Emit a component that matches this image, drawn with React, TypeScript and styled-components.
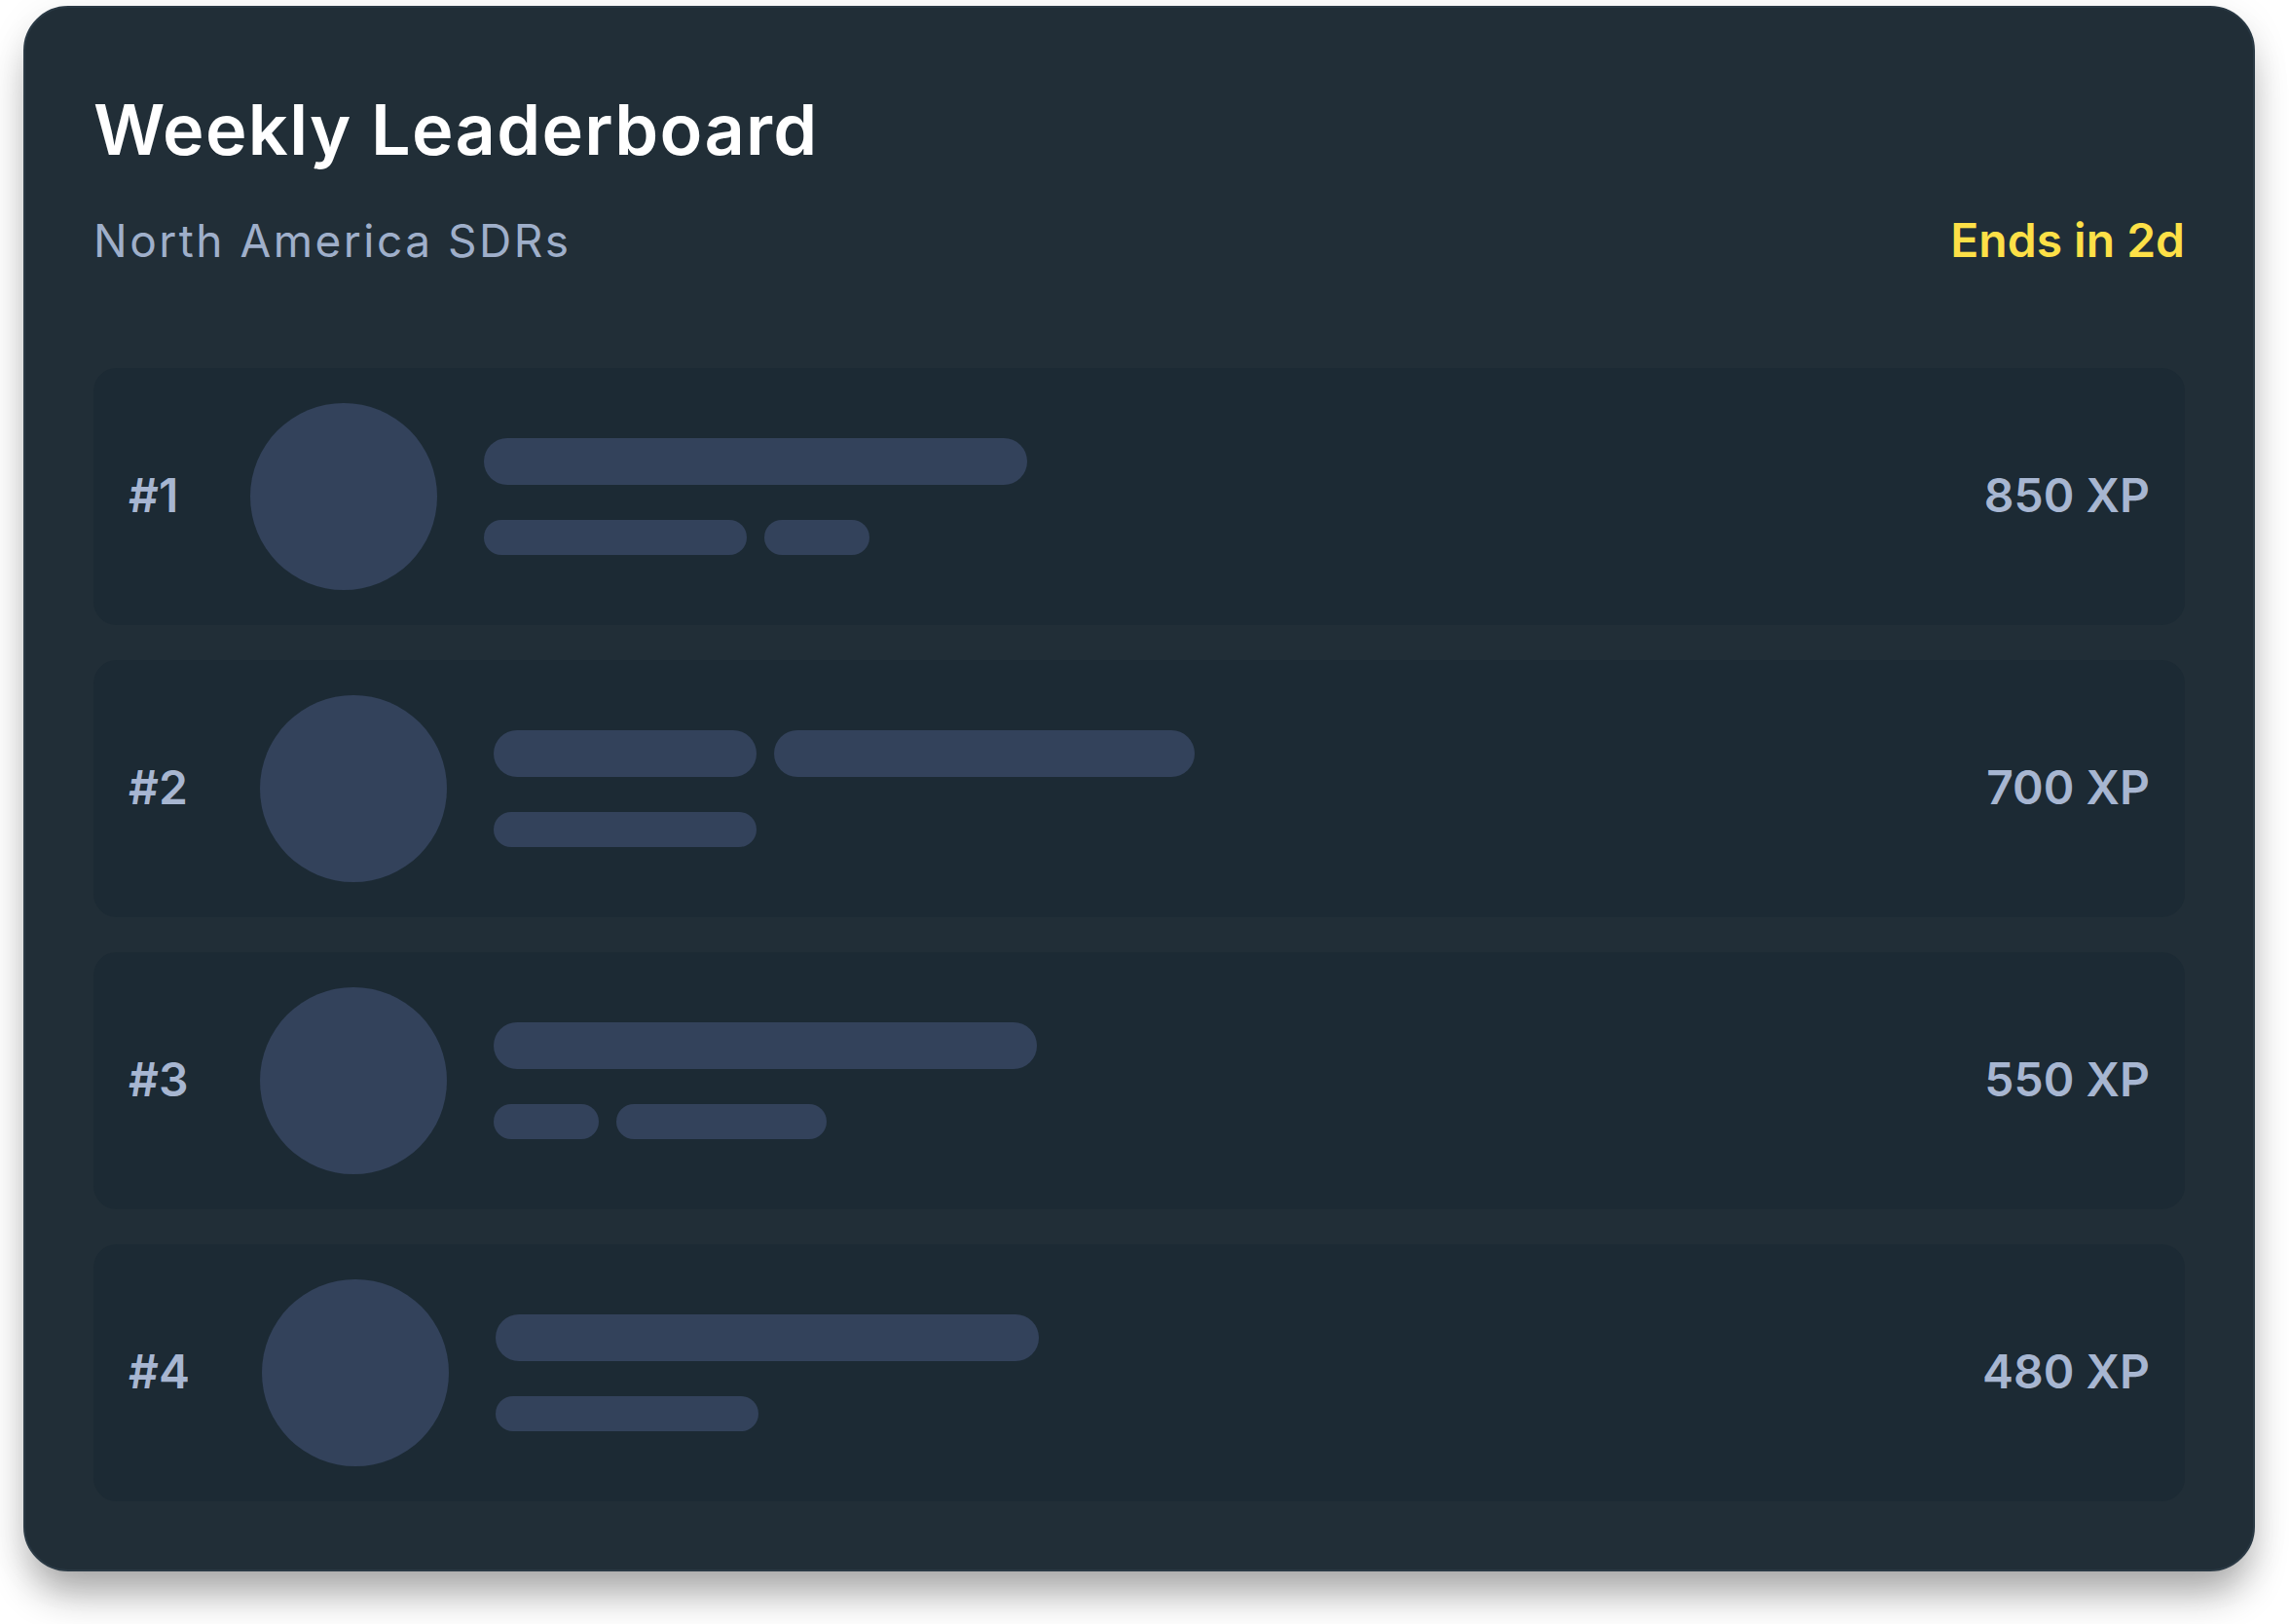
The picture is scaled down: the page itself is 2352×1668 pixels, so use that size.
import styled, { createGlobalStyle } from 'styled-components';

const GlobalStyle = createGlobalStyle`
  html, body {
    margin: 0;
    padding: 0;
    background: #ffffff;
    font-family: Inter, "Noto Sans", sans-serif;
  }
`;

const Page = styled.div`
  box-sizing: border-box;
  min-height: 100vh;
  padding: 6px 0 0 24px;
`;

const Card = styled.section`
  box-sizing: border-box;
  width: 2292px;
  padding: 81px 70px 70px;
  background: #212e37;
  border: 2px solid #2a3944;
  border-radius: 46px;
  box-shadow: 0 30px 40px -8px rgba(0, 0, 0, 0.32), 0 8px 40px rgba(0, 0, 0, 0.08);
`;

const Title = styled.h1`
  margin: 0;
  font-size: 72px;
  line-height: 88px;
  font-weight: 600;
  letter-spacing: 1.3px;
  color: #ffffff;
`;

const SubRow = styled.div`
  display: flex;
  justify-content: space-between;
  align-items: baseline;
  margin-top: 40px;
  line-height: 60px;
`;

const Region = styled.span`
  font-size: 46px;
  font-weight: 400;
  letter-spacing: 2.5px;
  color: #9fafca;
`;

const Countdown = styled.span`
  font-size: 48px;
  font-weight: 600;
  color: #fde047;
`;

const List = styled.div`
  display: flex;
  flex-direction: column;
  gap: 36px;
  margin-top: 101px;
`;

const Row = styled.div`
  display: flex;
  align-items: center;
  padding: 36px;
  background: #1c2a34;
  border-radius: 24px;
`;

const Rank = styled.span`
  font-size: 48px;
  font-weight: 600;
  color: #a7b6d1;
  margin: -3px 74px 0 0;
`;

const Avatar = styled.div`
  flex: none;
  width: 192px;
  height: 192px;
  border-radius: 50%;
  background: #33425b;
  margin-right: 48px;
`;

const Lines = styled.div`
  display: flex;
  flex-direction: column;
  gap: 36px;
  flex: 1;
`;

const Line = styled.div`
  display: flex;
  gap: 18px;
`;

const Bar = styled.div<{ $w: number; $h: number }>`
  width: ${(p) => p.$w}px;
  height: ${(p) => p.$h}px;
  border-radius: 999px;
  background: #33425b;
`;

const Score = styled.span`
  font-size: 48px;
  font-weight: 600;
  color: #a7b6d1;
  margin-top: -3px;
`;

type Entry = { rank: number; xp: number; top: number[]; bottom: number[] };

const entries: Entry[] = [
  { rank: 1, xp: 850, top: [558], bottom: [270, 108] },
  { rank: 2, xp: 700, top: [270, 432], bottom: [270] },
  { rank: 3, xp: 550, top: [558], bottom: [108, 216] },
  { rank: 4, xp: 480, top: [558], bottom: [270] },
];

export default function App() {
  return (
    <Page>
      <GlobalStyle />
      <Card>
        <Title>Weekly Leaderboard</Title>
        <SubRow>
          <Region>North America SDRs</Region>
          <Countdown>Ends in 2d</Countdown>
        </SubRow>
        <List>
          {entries.map((e) => (
            <Row key={e.rank}>
              <Rank>#{e.rank}</Rank>
              <Avatar />
              <Lines>
                <Line>
                  {e.top.map((w, i) => (
                    <Bar key={i} $w={w} $h={48} />
                  ))}
                </Line>
                <Line>
                  {e.bottom.map((w, i) => (
                    <Bar key={i} $w={w} $h={36} />
                  ))}
                </Line>
              </Lines>
              <Score>{e.xp} XP</Score>
            </Row>
          ))}
        </List>
      </Card>
    </Page>
  );
}
